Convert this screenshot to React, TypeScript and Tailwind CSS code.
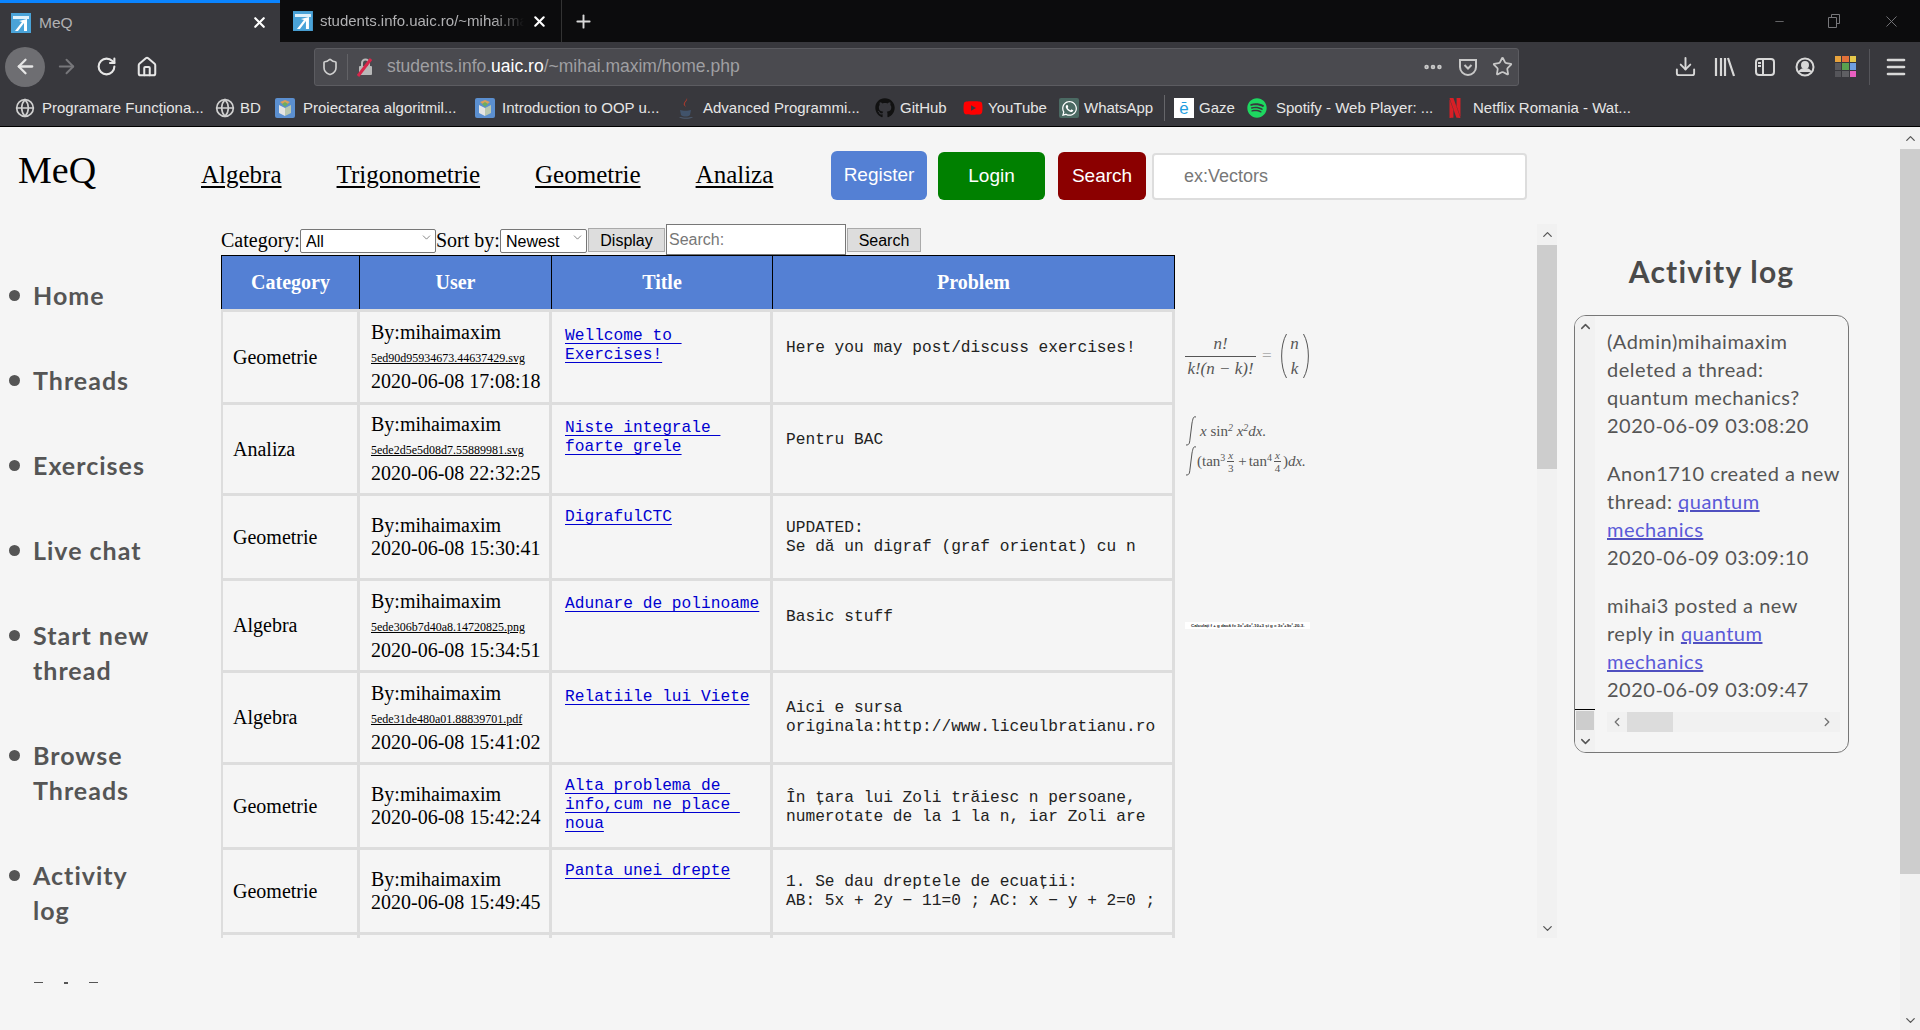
import { ArrowLeft, ArrowRight, ChevronDown, ChevronLeft, ChevronRight, ChevronUp, Download, Globe, Home, Menu, Minus, MoreHorizontal, Plus, RotateCw, Shield, Star, X } from 'lucide-react';
import { FaGithub, FaSpotify, FaWhatsapp, FaYoutube } from 'react-icons/fa';
import { SiNetflix } from 'react-icons/si';
import type { ReactNode } from 'react';

const comic = 'font-["Lato","Noto_Sans",sans-serif]';

function Favicon() {
  return (
    <svg width="20" height="20" viewBox="0 0 20 20">
      <rect width="20" height="20" fill="#4aa3d8" />
      <path d="M2 3h16v3H2z" fill="#dff1fb" />
      <path d="M4 18l7-9-3-1 8-2v12h-3V10l-6 8z" fill="#fff" />
    </svg>
  );
}

function BookIcon() {
  return (
    <svg width="20" height="20" viewBox="0 0 20 20">
      <rect width="20" height="20" rx="2" fill="#5b8fd0" />
      <path d="M4 7l6 3v8l-6-3z" fill="#e4e4e4" />
      <path d="M16 7l-6 3v8l6-3z" fill="#b9c7b0" />
      <path d="M5 4l5 4 5-4-5-2z" fill="#d9a05b" />
      <path d="M7 6l3 3 3-3-3-2z" fill="#6aae62" />
    </svg>
  );
}

function JavaIcon() {
  return (
    <svg width="18" height="22" viewBox="0 0 18 22">
      <path d="M10 1c1 3-3 4-2 7 .4 1 1 1.500 1 2-1-1-3-2-2-4 .6-2 3-3 3-5z" fill="#b13a2c" />
      <path d="M3 13c3 1 8 1 11 0l-1 5c-2 2-7 2-9 0z" fill="#41536b" />
      <path d="M2 20c3 1 11 1 14 0-2 2-12 2-14 0z" fill="#556a85" />
    </svg>
  );
}

function Bookmark({ width, gap = 'gap-[7px]', icon, label }: { width: string; gap?: string; icon: ReactNode; label: string }) {
  return (
    <div className={`flex items-center shrink-0 ${gap} ${width}`}>
      <span className="flex w-[20px] h-[20px] items-center justify-center shrink-0">{icon}</span>
      <span className="text-[15px] text-[#e6e6e6] whitespace-nowrap">{label}</span>
    </div>
  );
}

function BrowserChrome() {
  return (
    <div className='shrink-0 font-["Liberation_Sans",sans-serif]'>
      <div className="flex h-[42px] bg-[#0c0c0d]">
        <div className="flex w-[280px] items-center gap-[8px] border-t-[3px] border-[#0a84ff] bg-[#38383d] pl-[11px] pr-[12px]">
          <Favicon />
          <span className="flex-1 text-[15.5px] text-[#b1b1b3]">MeQ</span>
          <X size={17} strokeWidth={3} className="text-white" />
        </div>
        <div className="flex w-[282px] items-center gap-[7px] border-r border-[#333] pl-[13px] pr-[13px]">
          <Favicon />
          <span className="w-[205px] overflow-hidden whitespace-nowrap text-[15px] text-[#b1b1b3] [mask-image:linear-gradient(90deg,#000_85%,transparent)]">students.info.uaic.ro/~mihai.maxim</span>
          <X size={17} strokeWidth={3} className="text-white" />
        </div>
        <div className="flex items-center pl-[11px]">
          <Plus size={21} strokeWidth={2.2} className="text-[#d8d8d8]" />
        </div>
        <div className="ml-auto flex items-center gap-[42px] pr-[19px] text-[#77777a]">
          <Minus size={13} strokeWidth={1.5} />
          <svg width="12" height="14" viewBox="0 0 12 14" fill="none" stroke="currentColor">
            <path d="M.5 3.500h8v10h-8zM3.500 3.500v-3h8v9h-3" />
          </svg>
          <X size={19} strokeWidth={1.2} />
        </div>
      </div>

      <div className="flex h-[47px] items-center bg-[#38383d] pl-[5px] pt-[2px]">
        <div className="flex h-[40px] w-[40px] items-center justify-center rounded-full bg-[#6e6e72]">
          <ArrowLeft size={23} strokeWidth={2.4} className="text-[#e6e6e6]" />
        </div>
        <ArrowRight size={23} strokeWidth={2} className="ml-[10px] text-[#77777b]" />
        <RotateCw size={21} strokeWidth={2.4} className="ml-[18px] text-[#e6e6e6]" />
        <Home size={22} strokeWidth={2.2} className="ml-[19px] text-[#e6e6e6]" />
        <div className="ml-[156px] flex h-[38px] w-[1205px] items-center rounded-[3px] border border-[#5c5c61] bg-[#4a4a4f]">
          <Shield size={18} strokeWidth={2.2} className="ml-[6px] text-[#d0d0d0]" />
          <div className="ml-[8px] h-[26px] w-px bg-[#626266]" />
          <svg width="20" height="20" viewBox="0 0 20 20" className="ml-[7px]">
            <rect x="4" y="9" width="13" height="9" rx="1" fill="#b8b8b8" />
            <path d="M7 9V6a3.500 3.500 0 0 1 7 0v3" fill="none" stroke="#b8b8b8" strokeWidth="2" />
            <path d="M3 19L16 2" stroke="#d7264a" strokeWidth="3" />
          </svg>
          <span className="ml-[12px] flex-1 text-[17.5px] text-[#9f9fa2]">
            students.info.<span className="text-white">uaic.ro</span>/~mihai.maxim/home.php
          </span>
          <MoreHorizontal size={22} strokeWidth={3} className="text-[#c8c8c8]" />
          <svg width="20" height="20" viewBox="0 0 20 20" fill="none" stroke="#c8c8c8" strokeWidth="2" className="ml-[14px]">
            <path d="M2 3h16v7a8 8 0 0 1-16 0z" />
            <path d="M6.500 8L10 11.500 13.500 8" />
          </svg>
          <Star size={21} strokeWidth={2} className="ml-[14px] mr-[5px] text-[#c8c8c8]" />
        </div>
        <Download size={23} strokeWidth={2} className="ml-[155px] text-[#d8d8d8]" />
        <svg width="22" height="20" viewBox="0 0 22 20" stroke="#d8d8d8" strokeWidth="2.200" className="ml-[17px]">
          <path d="M2 1v18M7 1v18M11 1v18M14 1l6 18" />
        </svg>
        <svg width="20" height="20" viewBox="0 0 20 20" fill="none" stroke="#d8d8d8" strokeWidth="2" className="ml-[19px]">
          <rect x="1" y="2" width="18" height="16" rx="3" />
          <path d="M8 2v16M3 6h3M3 9h3" />
        </svg>
        <svg width="20" height="20" viewBox="0 0 20 20" fill="none" stroke="#d8d8d8" strokeWidth="2" className="ml-[20px]">
          <circle cx="10" cy="10" r="8.500" />
          <circle cx="10" cy="8" r="3" fill="#d8d8d8" />
          <path d="M4 15c3-4 9-4 12 0" fill="#d8d8d8" />
        </svg>
        <div className="ml-[20px] grid h-[21px] w-[21px] grid-cols-3 gap-px">
          <span className="bg-[#e8a33d]" />
          <span className="bg-[#e2703a]" />
          <span className="bg-[#e5c84b]" />
          <span className="bg-[#5a5a5e]" />
          <span className="bg-[#59a14f]" />
          <span className="bg-[#6f9fe0]" />
          <span className="bg-[#55555a]" />
          <span className="bg-[#5f5f63]" />
          <span className="bg-[#e85fc0]" />
        </div>
        <div className="ml-[13px] h-[36px] w-px bg-[#55555a]" />
        <Menu size={24} strokeWidth={2.6} className="ml-[14px] text-[#d8d8d8]" />
      </div>

      <div className="flex h-[38px] items-center border-b border-black bg-[#38383d] pl-[15px] pt-[1px]">
        <Bookmark width="w-[200px]" icon={<Globe size={20} className="text-[#d0d0d0]" />} label="Programare Funcționa..." />
        <Bookmark width="w-[60px]" gap="gap-[5px]" icon={<Globe size={20} className="text-[#d0d0d0]" />} label="BD" />
        <Bookmark width="w-[200px]" gap="gap-[8px]" icon={<BookIcon />} label="Proiectarea algoritmil..." />
        <Bookmark width="w-[201px]" icon={<BookIcon />} label="Introduction to OOP u..." />
        <Bookmark width="w-[199px]" icon={<JavaIcon />} label="Advanced Programmi..." />
        <Bookmark width="w-[88px]" gap="gap-[5px]" icon={<FaGithub size={20} className="text-[#111]" />} label="GitHub" />
        <Bookmark width="w-[96px]" gap="gap-[5px]" icon={<FaYoutube size={20} className="text-[#f00]" />} label="YouTube" />
        <Bookmark width="w-[105px]" gap="gap-[5px]" icon={<span className="flex h-[20px] w-[20px] items-center justify-center rounded-[2px] bg-[#4b6a63]"><FaWhatsapp size={17} className="text-white" /></span>} label="WhatsApp" />
        <div className="h-[26px] w-px bg-[#66666a]" />
        <div className="w-[9px]" />
        <Bookmark width="w-[73px]" gap="gap-[5px]" icon={<span className="flex h-[20px] w-[20px] items-center justify-center bg-white text-[17px] leading-none text-[#1f9ee0]">ē</span>} label="Gaze" />
        <Bookmark width="w-[198px]" gap="gap-[9px]" icon={<FaSpotify size={20} className="text-[#1ed760]" />} label="Spotify - Web Player: ..." />
        <Bookmark width="w-[260px]" gap="gap-[8px]" icon={<SiNetflix size={20} className="text-[#d81f26]" />} label="Netflix Romania - Wat..." />
      </div>
    </div>
  );
}

function Header() {
  const links = ['Algebra', 'Trigonometrie', 'Geometrie', 'Analiza'];
  return (
    <div className='flex h-[97px] shrink-0 items-start pl-[18px] font-["Liberation_Serif",serif]'>
      <div className="mt-[18px] w-[183px] text-[38px] leading-[50px] text-black">MeQ</div>
      <div className="mt-[33px] flex w-[630px] gap-[55px] text-[25px] leading-[30px] text-black">
        {links.map((l) => (
          <a key={l} href="#" className="underline underline-offset-[3px]">{l}</a>
        ))}
      </div>
      <div className='mt-[24px] flex items-center font-["Liberation_Sans",sans-serif] text-[19px] text-white'>
        <button className="flex h-[49px] w-[96px] items-center justify-center rounded-[6px] bg-[#5480d4]">Register</button>
        <button className="ml-[11px] mt-[1px] flex h-[48px] w-[107px] items-center justify-center rounded-[6px] bg-[#008000]">Login</button>
        <button className="ml-[13px] mt-[1px] flex h-[48px] w-[88px] items-center justify-center rounded-[6px] bg-[#8b0000]">Search</button>
        <input placeholder="ex:Vectors" className="ml-[6px] mt-[2px] h-[47px] w-[375px] rounded-[4px] border-2 border-[#ddd] bg-white pl-[30px] text-[18px] outline-none placeholder:text-[#777]" />
      </div>
    </div>
  );
}

function Sidebar() {
  const items = [['Home'], ['Threads'], ['Exercises'], ['Live chat'], ['Start new', 'thread'], ['Browse', 'Threads'], ['Activity', 'log']];
  return (
    <div className={`flex h-[763px] w-[221px] shrink-0 flex-col overflow-hidden pl-[9px] pt-[54px] text-[25px] font-bold leading-[35px] tracking-[1px] text-[#555] ${comic}`}>
      {items.map((lines) => (
        <div key={lines.join()} className="mb-[50px] flex gap-[13px]">
          <span className="mt-[12px] h-[11px] w-[11px] shrink-0 rounded-full bg-[#555]" />
          <div>
            {lines.map((l) => (
              <div key={l}>{l}</div>
            ))}
          </div>
        </div>
      ))}
      <div className="ml-[25px] mt-[4px] flex gap-[21px]">
        <span className="h-[1px] w-[9px] bg-[#555]" />
        <span className="h-[2px] w-[4px] bg-[#555]" />
        <span className="h-[1px] w-[9px] bg-[#555]" />
      </div>
    </div>
  );
}

function FormulaBinomial() {
  return (
    <div className='flex items-center font-["Liberation_Serif",serif] text-[17px] leading-[18px] text-[#555]'>
      <div className="flex w-[71px] flex-col items-center italic">
        <span className="pb-[3px]">n!</span>
        <span className="w-full whitespace-nowrap border-t border-[#555] pt-[3px] text-center">k!(n − k)!</span>
      </div>
      <span className="ml-[6px] text-[#aaa]">=</span>
      <svg width="8" height="44" viewBox="0 0 8 44" fill="none" stroke="#555" className="ml-[7px]">
        <path d="M7.500 0C1 11 1 33 7.500 44" />
      </svg>
      <div className="flex w-[16px] flex-col items-center gap-[7px] italic">
        <span>n</span>
        <span>k</span>
      </div>
      <svg width="8" height="44" viewBox="0 0 8 44" fill="none" stroke="#555">
        <path d="M.5 0C7 11 7 33 .5 44" />
      </svg>
    </div>
  );
}

function Integral() {
  return (
    <svg width="12" height="30" viewBox="0 0 12 30" fill="none" stroke="#555" className="shrink-0">
      <path d="M11 1c-3-1-3 2-4 6L5 23c-.5 5-1 6-4 6" />
    </svg>
  );
}

function FormulaIntegrals() {
  return (
    <div className='flex flex-col whitespace-nowrap font-["Liberation_Serif",serif] text-[15px] leading-[15px] text-[#555]'>
      <div className="flex items-center gap-[3px]">
        <Integral />
        <span className="italic">x <span className="not-italic">sin</span><sup className="text-[10px]">2</sup> x<sup className="text-[10px]">2</sup>dx.</span>
      </div>
      <div className="flex items-center">
        <Integral />
        <span>(tan<sup className="text-[10px]">3</sup></span>
        <span className="mx-[2px] flex flex-col items-center text-[11px] leading-[12px] italic">
          <span className="border-b border-[#555] px-px">x</span>
          <span className="not-italic">3</span>
        </span>
        <span className="mx-[2px]">+</span>
        <span>tan<sup className="text-[10px]">4</sup></span>
        <span className="mx-[2px] flex flex-col items-center text-[11px] leading-[12px] italic">
          <span className="border-b border-[#555] px-px">x</span>
          <span className="not-italic">4</span>
        </span>
        <span>)<i>dx.</i></span>
      </div>
    </div>
  );
}

function FormulaStrip() {
  return (
    <div className='flex h-[7px] w-[125px] items-center whitespace-nowrap bg-white pl-[6px] font-["Liberation_Sans",sans-serif] text-[4.4px] font-bold text-[#222]'>
      Calculați f + g dacă f= 3x²+6x²-10+3 și g = 3x²+9x²-20-3.
    </div>
  );
}

type Row = {
  category: string;
  file?: string;
  date: string;
  title: string[];
  problem: string[];
  height: string;
  titlePad: string;
  problemPad: string;
  imagePad?: string;
  image?: ReactNode;
};

const rows: Row[] = [
  { category: 'Geometrie', file: '5ed90d95934673.44637429.svg', date: '2020-06-08 17:08:18', title: ['Wellcome to ', 'Exercises!'], problem: ['Here you may post/discuss exercises!'], height: 'h-[93px]', titlePad: 'pt-[15px]', problemPad: 'pt-[27px]', imagePad: 'pt-[25px]', image: <FormulaBinomial /> },
  { category: 'Analiza', file: '5ede2d5e5d08d7.55889981.svg', date: '2020-06-08 22:32:25', title: ['Niste integrale ', 'foarte grele'], problem: ['Pentru BAC'], height: 'h-[91px]', titlePad: 'pt-[14px]', problemPad: 'pt-[26px]', imagePad: 'pt-[14px]', image: <FormulaIntegrals /> },
  { category: 'Geometrie', date: '2020-06-08 15:30:41', title: ['DigrafulCTC'], problem: ['UPDATED:', 'Se dă un digraf (graf orientat) cu n'], height: 'h-[85px]', titlePad: 'pt-[12px]', problemPad: 'pt-[23px]' },
  { category: 'Algebra', file: '5ede306b7d40a8.14720825.png', date: '2020-06-08 15:34:51', title: ['Adunare de polinoame'], problem: ['Basic stuff'], height: 'h-[92px]', titlePad: 'pt-[14px]', problemPad: 'pt-[27px]', imagePad: 'pt-[44px]', image: <FormulaStrip /> },
  { category: 'Algebra', file: '5ede31de480a01.88839701.pdf', date: '2020-06-08 15:41:02', title: ['Relatiile lui Viete'], problem: ['Aici e sursa', 'originala:http://www.liceulbratianu.ro'], height: 'h-[92px]', titlePad: 'pt-[15px]', problemPad: 'pt-[26px]' },
  { category: 'Geometrie', date: '2020-06-08 15:42:24', title: ['Alta problema de ', 'info,cum ne place ', 'noua'], problem: ['În țara lui Zoli trăiesc n persoane,', 'numerotate de la 1 la n, iar Zoli are'], height: 'h-[85px]', titlePad: 'pt-[12px]', problemPad: 'pt-[24px]' },
  { category: 'Geometrie', date: '2020-06-08 15:49:45', title: ['Panta unei drepte'], problem: ['1. Se dau dreptele de ecuații:', 'AB: 5x + 2y − 11=0 ; AC: x − y + 2=0 ;'], height: 'h-[85px]', titlePad: 'pt-[12px]', problemPad: 'pt-[23px]' },
];

const cell = 'border-t-[3px] border-r-[3px] border-[#ddd]';
const head = 'border-t border-r border-black bg-[#5480d4] text-center text-[20px] font-bold text-white';

function ThreadTable() {
  return (
    <table className='table-fixed border-separate border-spacing-0 font-["Liberation_Serif",serif] text-[20px] leading-[23px] text-black'>
      <colgroup>
        <col className="w-[139px]" />
        <col className="w-[192px]" />
        <col className="w-[221px]" />
        <col className="w-[402px]" />
        <col className="w-[150px]" />
      </colgroup>
      <thead>
        <tr className="h-[54px]">
          <th className={`${head} border-l`}>Category</th>
          <th className={head}>User</th>
          <th className={head}>Title</th>
          <th className={head}>Problem</th>
          <th />
        </tr>
      </thead>
      <tbody>
        {rows.map((r) => (
          <tr key={r.date} className={r.height}>
            <td className={`${cell} border-l-2 pl-[10px] align-middle`}>{r.category}</td>
            <td className={`${cell} pl-[11px] align-middle whitespace-nowrap`}>
              <div>By:mihaimaxim</div>
              {r.file && <div><a href="#" className="text-[12px] underline">{r.file}</a></div>}
              <div>{r.date}</div>
            </td>
            <td className={`${cell} pl-[13px] align-top ${r.titlePad} font-["Liberation_Mono",monospace] text-[16.2px] leading-[19px]`}>
              {r.title.map((t) => (
                <div key={t}>
                  <a href="#" className="whitespace-pre text-[#0000d0] underline underline-offset-[3px]">{t}</a>
                </div>
              ))}
            </td>
            <td className={`${cell} pl-[13px] align-top ${r.problemPad} font-["Liberation_Mono",monospace] text-[16.2px] leading-[19px] text-[#222] whitespace-nowrap`}>
              {r.problem.map((p) => (
                <div key={p}>{p}</div>
              ))}
            </td>
            <td className={`pl-[10px] align-top ${r.imagePad ?? ''}`}>{r.image}</td>
          </tr>
        ))}
        <tr className="h-[30px]">
          <td className={`${cell} border-l-2`} />
          <td className={cell} />
          <td className={cell} />
          <td className={cell} />
          <td />
        </tr>
      </tbody>
    </table>
  );
}

function SelectBox({ width, label }: { width: string; label: string }) {
  return (
    <div className={`relative ${width}`}>
      <select className='h-[24px] w-full appearance-none rounded-[2px] border border-[#777] bg-white pl-[5px] font-["Liberation_Sans",sans-serif] text-[16px] text-black'>
        <option>{label}</option>
      </select>
      <ChevronDown size={13} strokeWidth={1.3} className="pointer-events-none absolute right-[3px] top-[6px] text-[#555]" />
    </div>
  );
}

function FilterBar() {
  const btn = 'h-[24px] border border-[#aaa] bg-[#ddd] font-["Liberation_Sans",sans-serif] text-[16px] text-black';
  return (
    <div className='flex h-[31px] items-center font-["Liberation_Serif",serif] text-[20px] text-black'>
      <span className="w-[79px]">Category:</span>
      <SelectBox width="w-[136px]" label="All" />
      <span className="w-[64px] whitespace-nowrap">Sort by:</span>
      <SelectBox width="w-[87px]" label="Newest" />
      <button className={`ml-[1px] w-[77px] ${btn}`}>Display</button>
      <input placeholder="Search:" className='ml-[1px] h-[31px] w-[180px] border border-[#777] bg-white pl-[2px] font-["Liberation_Sans",sans-serif] text-[16px] outline-none placeholder:text-[#777]' />
      <button className={`ml-[1px] w-[74px] ${btn}`}>Search</button>
    </div>
  );
}

function VScroll({ thumb, top, bottom }: { thumb: string; top: string; bottom: string }) {
  return (
    <div className="flex w-[20px] shrink-0 flex-col bg-[#f1f1f1]">
      <div className={`flex items-center justify-center ${top}`}>
        <ChevronUp size={15} strokeWidth={2} className="text-[#555]" />
      </div>
      <div className={`w-full bg-[#cdcdcd] ${thumb}`} />
      <div className="flex-1" />
      <div className={`flex items-center justify-center ${bottom}`}>
        <ChevronDown size={15} strokeWidth={2} className="text-[#555]" />
      </div>
    </div>
  );
}

function LogEntry({ children, date }: { children: ReactNode; date: string }) {
  return (
    <div className="whitespace-nowrap">
      {children}
      <div>{date}</div>
    </div>
  );
}

function QuantumLink() {
  return (
    <a href="#" className="text-[#5a5ad8] underline decoration-[#5050c0]">
      quantum
      <br />
      mechanics
    </a>
  );
}

function ActivityLog() {
  return (
    <div className={`ml-[17px] flex w-[275px] shrink-0 flex-col ${comic}`}>
      <div className="mt-[27px] text-center text-[30px] font-bold leading-[40px] tracking-[1.2px] text-[#4a4a4a]">Activity log</div>
      <div className="mt-[24px] flex h-[438px] overflow-hidden rounded-[12px] border border-[#777] text-[20px] leading-[28px] tracking-[0.5px] text-[#555]">
        <div className="flex w-[20px] shrink-0 flex-col bg-[#f1f1f1]">
          <div className="flex h-[21px] items-center justify-center">
            <ChevronUp size={15} strokeWidth={2.4} className="text-[#555]" />
          </div>
          <div className="flex-1" />
          <div className="border-t border-black pl-px pt-px">
            <div className="h-[19px] w-[18px] bg-[#cdcdcd]" />
          </div>
          <div className="flex h-[22px] items-center justify-center">
            <ChevronDown size={15} strokeWidth={2.4} className="text-[#555]" />
          </div>
        </div>
        <div className="flex flex-1 flex-col pl-[12px] pr-[10px] pt-[11px]">
          <div className="flex h-[385px] flex-col gap-[20px] overflow-hidden">
            <LogEntry date="2020-06-09 03:08:20">(Admin)mihaimaxim<br />deleted a thread:<br />quantum mechanics?</LogEntry>
            <LogEntry date="2020-06-09 03:09:10">Anon1710 created a new<br />thread: <QuantumLink /></LogEntry>
            <LogEntry date="2020-06-09 03:09:47">mihai3 posted a new<br />reply in <QuantumLink /></LogEntry>
          </div>
          <div className="flex h-[20px] items-center bg-[#f1f1f1]">
            <ChevronLeft size={14} strokeWidth={2.4} className="mx-[3px] text-[#777]" />
            <div className="h-full w-[46px] bg-[#dcdcdc]" />
            <div className="flex-1" />
            <ChevronRight size={14} strokeWidth={2.4} className="mr-[6px] text-[#777]" />
          </div>
        </div>
      </div>
    </div>
  );
}

export default function App() {
  return (
    <div className="flex h-screen w-full flex-col overflow-hidden bg-[#f5f5f5]">
      <BrowserChrome />
      <div className="flex min-h-0 flex-1">
        <div className="flex min-w-0 flex-1 flex-col">
          <Header />
          <div className="flex">
            <Sidebar />
            <div className="flex h-[714px] w-[1336px] shrink-0">
              <div className="min-w-0 flex-1 overflow-hidden">
                <FilterBar />
                <ThreadTable />
              </div>
              <VScroll thumb="h-[224px]" top="h-[21px]" bottom="h-[20px]" />
            </div>
            <ActivityLog />
          </div>
        </div>
        <VScroll thumb="h-[725px]" top="h-[22px]" bottom="h-[20px]" />
      </div>
    </div>
  );
}
